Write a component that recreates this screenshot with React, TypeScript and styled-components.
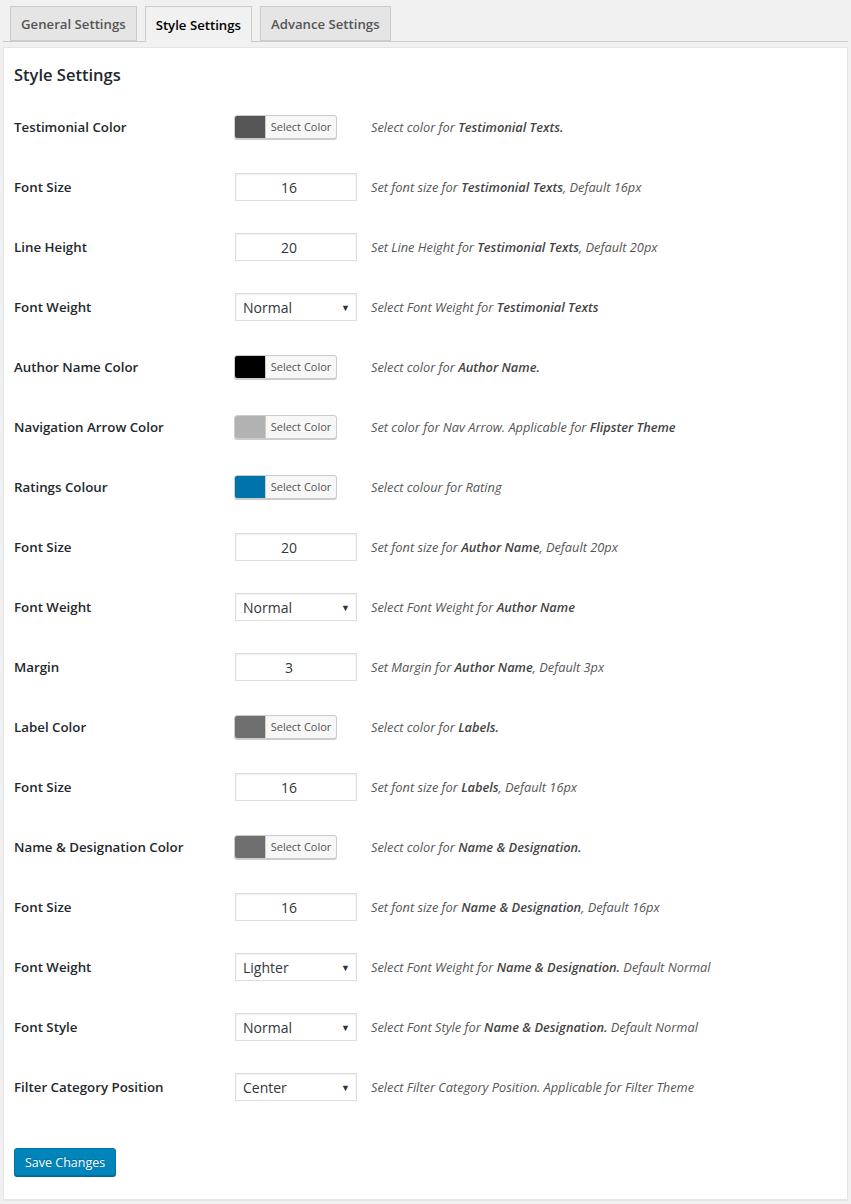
import React from 'react';
import styled, { createGlobalStyle } from 'styled-components';

const GlobalStyle = createGlobalStyle`
  body {
    margin: 0;
    background: #f1f1f1;
    font-family: "Open Sans", "Noto Sans", sans-serif;
    color: #23282d;
  }
`;

type Row =
  | { label: string; kind: 'color'; color: string; desc: React.ReactNode }
  | { label: string; kind: 'number'; value: string; desc: React.ReactNode }
  | { label: string; kind: 'select'; value: string; desc: React.ReactNode };

const rows: Row[] = [
  { label: 'Testimonial Color', kind: 'color', color: '#555555', desc: <>Select color for <b>Testimonial Texts.</b></> },
  { label: 'Font Size', kind: 'number', value: '16', desc: <>Set font size for <b>Testimonial Texts</b>, Default 16px</> },
  { label: 'Line Height', kind: 'number', value: '20', desc: <>Set Line Height for <b>Testimonial Texts</b>, Default 20px</> },
  { label: 'Font Weight', kind: 'select', value: 'Normal', desc: <>Select Font Weight for <b>Testimonial Texts</b></> },
  { label: 'Author Name Color', kind: 'color', color: '#000000', desc: <>Select color for <b>Author Name.</b></> },
  { label: 'Navigation Arrow Color', kind: 'color', color: '#b2b2b2', desc: <>Set color for Nav Arrow. Applicable for <b>Flipster Theme</b></> },
  { label: 'Ratings Colour', kind: 'color', color: '#0073aa', desc: <>Select colour for Rating</> },
  { label: 'Font Size', kind: 'number', value: '20', desc: <>Set font size for <b>Author Name</b>, Default 20px</> },
  { label: 'Font Weight', kind: 'select', value: 'Normal', desc: <>Select Font Weight for <b>Author Name</b></> },
  { label: 'Margin', kind: 'number', value: '3', desc: <>Set Margin for <b>Author Name</b>, Default 3px</> },
  { label: 'Label Color', kind: 'color', color: '#6f6f6f', desc: <>Select color for <b>Labels.</b></> },
  { label: 'Font Size', kind: 'number', value: '16', desc: <>Set font size for <b>Labels</b>, Default 16px</> },
  { label: 'Name & Designation Color', kind: 'color', color: '#6f6f6f', desc: <>Select color for <b>Name &amp; Designation.</b></> },
  { label: 'Font Size', kind: 'number', value: '16', desc: <>Set font size for <b>Name &amp; Designation</b>, Default 16px</> },
  { label: 'Font Weight', kind: 'select', value: 'Lighter', desc: <>Select Font Weight for <b>Name &amp; Designation.</b> Default Normal</> },
  { label: 'Font Style', kind: 'select', value: 'Normal', desc: <>Select Font Style for <b>Name &amp; Designation.</b> Default Normal</> },
  { label: 'Filter Category Position', kind: 'select', value: 'Center', desc: <>Select Filter Category Position. Applicable for Filter Theme</> },
];

export default function App() {
  return (
    <>
      <GlobalStyle />
      <Page>
        <TabBar>
          <Tab>General Settings</Tab>
          <Tab active>Style Settings</Tab>
          <Tab>Advance Settings</Tab>
        </TabBar>
        <Panel>
          <Heading>Style Settings</Heading>
          <Form>
            {rows.map((row, i) => (
              <FieldRow key={i}>
                <Label>{row.label}</Label>
                <div>
                  {row.kind === 'color' && (
                    <ColorButton>
                      <Swatch color={row.color} />
                      <ColorText>Select Color</ColorText>
                    </ColorButton>
                  )}
                  {row.kind === 'number' && <NumberBox>{row.value}</NumberBox>}
                  {row.kind === 'select' && (
                    <SelectBox>
                      {row.value}
                      <Arrow>▼</Arrow>
                    </SelectBox>
                  )}
                </div>
                <Desc>{row.desc}</Desc>
              </FieldRow>
            ))}
          </Form>
          <SaveButton>Save Changes</SaveButton>
        </Panel>
      </Page>
    </>
  );
}

const Page = styled.div`
  padding: 6px 3px 4px 3px;
`;

const TabBar = styled.div`
  display: flex;
  gap: 8px;
  padding-left: 7px;
  border-bottom: 1px solid #ccc;
  height: 35px;
`;

const Tab = styled.div<{ active?: boolean }>`
  box-sizing: border-box;
  height: ${(p) => (p.active ? '36px' : '35px')};
  padding: 0 10px;
  display: flex;
  align-items: center;
  font-size: 13.2px;
  font-weight: 600;
  border: 1px solid #ccc;
  border-bottom: ${(p) => (p.active ? 'none' : '1px solid #ccc')};
  background: ${(p) => (p.active ? '#f1f1f1' : '#e5e5e5')};
  color: ${(p) => (p.active ? '#000' : '#555')};
`;

const Panel = styled.div`
  margin-top: 5px;
  background: #fff;
  border: 1px solid #e5e5e5;
  box-shadow: 0 1px 1px rgba(0, 0, 0, 0.04);
  padding: 14px 10px 23px 10px;
`;

const Heading = styled.h2`
  margin: 0;
  font-size: 16.5px;
  font-weight: 600;
  line-height: 26px;
  color: #23282d;
`;

const Form = styled.div`
  margin-top: 9px;
`;

const FieldRow = styled.div`
  display: grid;
  grid-template-columns: 221px 136px 1fr;
  align-items: center;
  height: 60px;
`;

const Label = styled.div`
  font-size: 13.3px;
  font-weight: 600;
  color: #23282d;
`;

const ColorButton = styled.div`
  box-sizing: border-box;
  display: flex;
  width: 103px;
  height: 24px;
  margin-left: -1px;
  border: 1px solid #ccc;
  border-radius: 3px;
  overflow: hidden;
  background: #f7f7f7;
  box-shadow: 0 1px 0 #ccc;
`;

const Swatch = styled.span<{ color: string }>`
  width: 30px;
  background: ${(p) => p.color};
  border-right: 1px solid #ccc;
`;

const ColorText = styled.span`
  flex: 1;
  text-align: center;
  font-size: 11px;
  line-height: 22px;
  color: #555;
`;

const NumberBox = styled.div`
  box-sizing: border-box;
  width: 122px;
  height: 28px;
  padding-right: 14px;
  border: 1px solid #ddd;
  box-shadow: inset 0 1px 2px rgba(0, 0, 0, 0.07);
  display: flex;
  align-items: center;
  justify-content: center;
  font-size: 14px;
  color: #32373c;
`;

const SelectBox = styled(NumberBox)`
  justify-content: space-between;
  padding: 0 6px 0 7px;
`;

const Arrow = styled.span`
  font-size: 9px;
  color: #333;
`;

const Desc = styled.div`
  font-size: 12.8px;
  font-style: italic;
  color: #555;
  b {
    font-weight: 600;
    color: #444;
  }
`;

const SaveButton = styled.button`
  margin-top: 31px;
  box-sizing: border-box;
  height: 28px;
  padding: 0 10px;
  font-family: inherit;
  font-size: 12.5px;
  color: #fff;
  background: #0085ba;
  border: 1px solid #0073aa;
  border-radius: 3px;
  box-shadow: 0 1px 0 #006799;
  text-shadow: 0 -1px 1px #006799;
`;
